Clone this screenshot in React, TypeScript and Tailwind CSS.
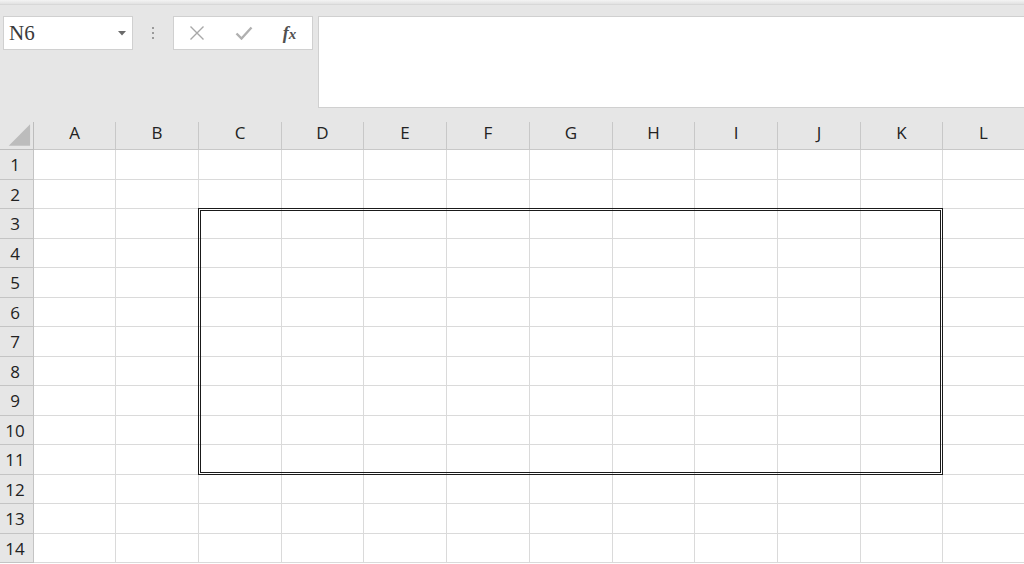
import React from "react";

const columns = ["A", "B", "C", "D", "E", "F", "G", "H", "I", "J", "K", "L"];
const rows = Array.from({ length: 14 }, (_, i) => i + 1);

function CornerTriangle() {
  return (
    <svg width="34" height="28" viewBox="0 0 34 28" className="block">
      <polygon points="9,25 31,25 31,3" fill="#bcbcbc" />
    </svg>
  );
}

function FormulaToolbar() {
  return (
    <div className="flex items-start pt-[11px] pl-[3px]">
      {/* name box */}
      <div className="flex h-[34px] w-[130px] items-center justify-between border border-[#d0d0d0] bg-white pl-[5px] pr-[6px]">
        <span className="text-[21px] leading-none text-[#3a3a3a] [font-family:'Liberation_Serif',serif]">N6</span>
        <svg width="8" height="5" viewBox="0 0 8 5">
          <polygon points="0,0 8,0 4,4.5" fill="#6a6a6a" />
        </svg>
      </div>
      {/* dots */}
      <div className="flex h-[34px] w-[40px] flex-col items-center justify-center gap-[3px]">
        <span className="h-[2px] w-[2px] bg-[#9a9a9a]" />
        <span className="h-[2px] w-[2px] bg-[#9a9a9a]" />
        <span className="h-[2px] w-[2px] bg-[#9a9a9a]" />
      </div>
      {/* cancel / enter / fx */}
      <div className="flex h-[34px] w-[140px] items-center border border-[#d0d0d0] bg-white">
        <div className="flex w-[46px] justify-center">
          <svg width="16" height="16" viewBox="0 0 16 16">
            <path d="M1.5 1.5 L14.5 14.5 M14.5 1.5 L1.5 14.5" stroke="#a8a8a8" strokeWidth="1.4" fill="none" />
          </svg>
        </div>
        <div className="flex w-[47px] justify-center">
          <svg width="18" height="14" viewBox="0 0 18 14">
            <path d="M1.5 7.5 L6.5 12.5 L16.5 1.5" stroke="#b0b0b0" strokeWidth="2.4" fill="none" />
          </svg>
        </div>
        <div className="flex w-[45px] justify-center">
          <span className="text-[18px] font-bold italic leading-none text-[#505050] [font-family:'Liberation_Serif',serif]">
            f<span className="text-[15px]">x</span>
          </span>
        </div>
      </div>
      {/* formula bar */}
      <div className="ml-[5px] h-[92px] flex-1 border border-[#d0d0d0] border-r-0 bg-white" />
    </div>
  );
}

export default function App() {
  return (
    <div className="h-[564px] w-[1024px] overflow-hidden bg-white [font-family:'Open_Sans',sans-serif]">
      <div className="h-[122px] bg-[#e6e6e6]">
        <div className="h-[5px] bg-gradient-to-b from-[#f4f4f4] to-[#e2e2e2] border-b border-[#d8d8d8]" />
        <FormulaToolbar />
      </div>

      <div className="grid grid-cols-[34px_82px_83px_83px_82px_83px_83px_83px_82px_83px_83px_82px_82px] grid-rows-[28px_30px_29px_30px_29px_30px_29px_30px_29px_30px_29px_30px_29px_30px_29px]">
        <div className="col-start-1 row-start-1 flex items-end border-b border-r border-[#bdbdbd] bg-[#e6e6e6]">
          <CornerTriangle />
        </div>
        {columns.map((c, ci) => (
          <div
            key={c}
            className="row-start-1 flex items-center justify-center border-b border-r border-[#c8c8c8] bg-[#e6e6e6] pb-[5px] text-[17px] text-[#222]"
            style={{ gridColumnStart: ci + 2 }}
          >
            {c}
          </div>
        ))}

        {rows.map((r) => (
          <React.Fragment key={r}>
            <div
              className="col-start-1 flex items-center justify-center border-b border-r border-[#c4c4c4] bg-[#e6e6e6] pr-[3px] pt-[1px] text-[17px] text-[#222]"
              style={{ gridRowStart: r + 1 }}
            >
              {r}
            </div>
            {columns.map((c, ci) => (
              <div
                key={c}
                className="border-b border-r border-[#dadada] bg-white"
                style={{ gridRowStart: r + 1, gridColumnStart: ci + 2 }}
              />
            ))}
          </React.Fragment>
        ))}

        {/* double outline around C3:K11 */}
        <div className="pointer-events-none col-start-4 col-end-13 row-start-4 row-end-13 -ml-px -mt-px border-[3px] border-double border-[#1a1a1a]" />
      </div>
    </div>
  );
}
